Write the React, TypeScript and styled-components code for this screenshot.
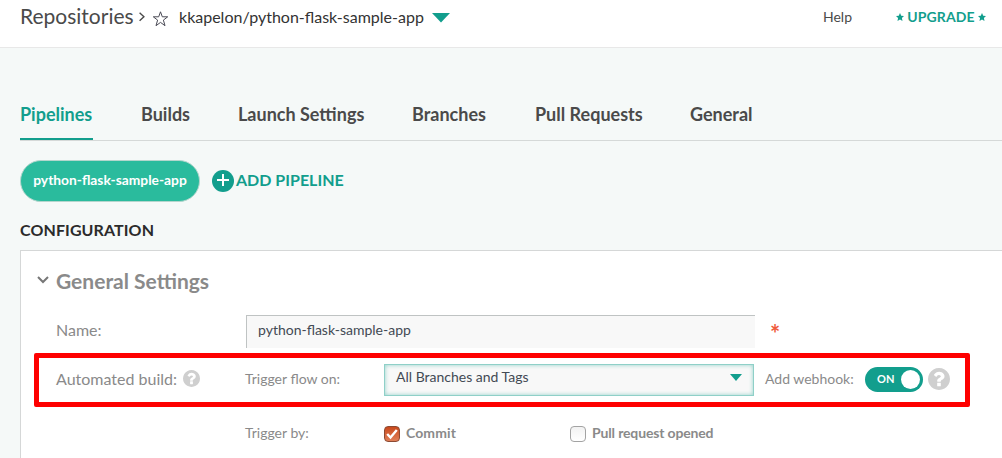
import React from 'react';
import styled, { createGlobalStyle } from 'styled-components';

const GlobalStyle = createGlobalStyle`
  * { box-sizing: border-box; }
  html, body { margin: 0; height: 458px; overflow: hidden; }
  body { background: #f5f9f8; font-family: Lato, "Liberation Sans", sans-serif; color: #4a4a4a; }
  button { font-family: inherit; border: 0; background: none; padding: 0; }
`;

const teal = '#129e8d';

const Page = styled.div`
  width: 1002px;
  height: 458px;
  overflow: hidden;
`;

const Header = styled.header`
  display: flex;
  align-items: flex-start;
  height: 48px;
  padding: 0 16px 0 20px;
  background: #fff;
  border-bottom: 1px solid #e8e8e8;
  white-space: nowrap;
`;

const Crumb = styled.span`
  width: 114px;
  font-size: 21px;
  line-height: 31px;
  color: #4a4a4a;
`;

const RepoName = styled.span`
  width: 246px;
  margin-left: 10px;
  font-size: 16px;
  line-height: 34px;
  color: #333;
`;

const HelpLink = styled.span`
  margin-left: auto;
  width: 29px;
  font-size: 14px;
  line-height: 33px;
`;

const Upgrade = styled.div`
  display: flex;
  align-items: center;
  justify-content: space-between;
  width: 90px;
  height: 33px;
  margin-left: 44px;
  font-size: 14px;
  font-weight: 700;
  letter-spacing: 0.1px;
  color: ${teal};
`;

const Main = styled.main`
  padding: 40px 0 0 20px;
`;

const Tabs = styled.nav`
  display: flex;
  gap: 48px;
  height: 53px;
  border-bottom: 1px solid #d5d9d8;
`;

const Tab = styled.span<{ $active?: boolean; $width: number }>`
  width: ${p => p.$width}px;
  height: 52px;
  border-bottom: ${p => (p.$active ? `2px solid ${teal}` : '0')};
  color: ${p => (p.$active ? teal : '#4a4a4a')};
  font-size: 18px;
  font-weight: 700;
  line-height: 53px;
  white-space: nowrap;
`;

const PipelineBar = styled.div`
  display: flex;
  align-items: center;
  gap: 12px;
  height: 42px;
  margin-top: 19px;
`;

const Pill = styled.button`
  width: 180px;
  height: 42px;
  padding-bottom: 3px;
  border: 1px solid #b4d6cd;
  border-radius: 21px;
  background: #2abb9d;
  color: #fff;
  font-size: 13.8px;
  font-weight: 700;
  white-space: nowrap;
`;

const AddButton = styled.button`
  display: flex;
  align-items: center;
  gap: 2px;
  color: ${teal};
  font-size: 16px;
  font-weight: 700;
  white-space: nowrap;
`;

const AddLabel = styled.span`
  padding-bottom: 3px;
`;

const SectionTitle = styled.h2`
  margin: 18px 0 0;
  height: 30px;
  font-size: 16px;
  font-weight: 700;
  letter-spacing: 0.1px;
  line-height: 19px;
  color: #2b2b2b;
`;

const Panel = styled.section`
  height: 240px;
  border: 1px solid #d5d7d7;
  border-right: 0;
  background: #fff;
`;

const PanelHeading = styled.h3`
  display: flex;
  align-items: center;
  gap: 7px;
  height: 62px;
  margin: 0;
  padding: 0 0 3px 16px;
  font-size: 21px;
  font-weight: 700;
  color: #8a8a8a;
`;

const Collapse = styled.svg`
  margin-bottom: 2px;
`;

const NameRow = styled.div`
  display: flex;
  height: 40px;
  padding: 2px 0 0 35px;
`;

const Label = styled.span<{ $width: number; $size?: number }>`
  width: ${p => p.$width}px;
  flex: none;
  padding-bottom: 2px;
  font-size: ${p => p.$size ?? 16}px;
  color: #8a8a8a;
  white-space: nowrap;
`;

const NameLabel = styled(Label)`
  line-height: 30px;
`;

const BuildLabel = styled(Label)`
  padding-bottom: 4px;
`;

const NameField = styled.div`
  width: 509px;
  height: 33px;
  padding-left: 11px;
  border-top: 1px solid #bfc3c3;
  border-left: 1px solid #bfc3c3;
  background: #f8f8f8;
  color: #434a54;
  font-size: 14px;
  line-height: 28px;
`;

const Required = styled.span`
  margin-left: 15px;
  font-size: 24px;
  font-weight: 700;
  line-height: 38px;
  color: #ef5a3c;
`;

const HighlightRow = styled.div`
  display: flex;
  align-items: center;
  width: 936px;
  height: 54px;
  margin-left: 13px;
  padding-left: 17px;
  border: 5px solid #fe0000;
  border-radius: 2px;
`;

const HelpSlot = styled.span<{ $size: number; $right: number; $lift: number }>`
  display: flex;
  width: ${p => p.$size}px;
  height: ${p => p.$size}px;
  margin-right: ${p => p.$right}px;
  margin-bottom: ${p => p.$lift}px;
`;

const Select = styled.div`
  display: flex;
  justify-content: space-between;
  width: 370px;
  height: 32px;
  margin-right: 11px;
  padding: 0 11px;
  border: 1px solid #8fd0c8;
  box-shadow: inset 0 0 4px #8fd0c8;
  background: #f8f8f8;
  color: #434a54;
  font-size: 14px;
  line-height: 24px;
`;

const SelectArrow = styled.svg`
  margin-top: 9px;
`;

const Toggle = styled.div`
  display: flex;
  align-items: center;
  justify-content: space-between;
  width: 58px;
  height: 25px;
  margin: 0 5px 1px 0;
  padding: 0 3px 0 12px;
  border-radius: 13px;
  background: ${teal};
  color: #fff;
  font-size: 11px;
  font-weight: 700;
`;

const ToggleText = styled.span`
  padding-bottom: 2px;
`;

const Knob = styled.span`
  width: 19px;
  height: 19px;
  border-radius: 50%;
  background: #fff;
`;

const TriggerRow = styled.div`
  display: flex;
  align-items: center;
  height: 53px;
  padding-left: 224px;
`;

const Option = styled.div<{ $tracking: number }>`
  display: flex;
  align-items: center;
  gap: 6px;
  width: 186px;
  color: #8a8a8a;
  font-size: 14px;
  font-weight: 700;
  letter-spacing: ${p => p.$tracking}px;
  white-space: nowrap;
`;

const OptionText = styled.span`
  padding-bottom: 2px;
`;

const Box = styled.span<{ $checked?: boolean }>`
  display: flex;
  align-items: center;
  justify-content: center;
  width: 16px;
  height: 16px;
  border: 1px solid ${p => (p.$checked ? '#8c4a33' : '#a3a3a3')};
  border-radius: 4px;
  background: ${p => (p.$checked ? 'linear-gradient(#c9491c, #e07f58)' : 'linear-gradient(#f2f2f2, #fff)')};
`;

const ChevronRight = styled.svg`
  margin: 12px 0 0 5px;
`;
const StarOutline = styled.svg`
  margin: 10px 0 0 7px;
`;
const RepoArrow = styled.svg`
  margin: 13px 0 0 7px;
`;

const SmallStar = () => (
  <svg width="8" height="8" viewBox="0 0 24 24" fill={teal}>
    <path d="M12 0l3.7 8 8.3 1-6.200 5.700L19.500 24 12 19.300 4.500 24l1.700-9.300L0 9l8.300-1z" />
  </svg>
);

const HelpIcon = ({ size, right = 0, lift = 0 }: { size: number; right?: number; lift?: number }) => (
  <HelpSlot $size={size} $right={right} $lift={lift}>
    <svg width={size} height={size} viewBox="128 128 1536 1536" fill="#cfcfcf">
      <path d="M1024 1376v-192q0-14-9-23t-23-9h-192q-14 0-23 9t-9 23v192q0 14 9 23t23 9h192q14 0 23-9t9-23zM1280 704q0-88-55.500-163t-138.500-116-170-41q-243 0-371 213-15 24 8 42l132 100q7 6 19 6 16 0 25-12 53-68 86-92 34-24 86-24 48 0 85.500 26t37.500 59q0 38-20 61t-68 45q-63 28-115.500 86.500t-52.500 125.500v36q0 14 9 23t23 9h192q14 0 23-9t9-23q0-19 21.500-49.500t54.500-49.500q32-18 49-28.500t46-35 44.500-48 28-60.500 12.500-81zM1664 896q0 209-103 385.500t-279.500 279.500-385.500 103-385.500-103-279.500-279.500-103-385.500 103-385.500 279.500-279.500 385.500-103 385.500 103 279.500 279.500 103 385.500z" />
    </svg>
  </HelpSlot>
);

const tabs = [
  { name: 'Pipelines', width: 73 },
  { name: 'Builds', width: 49 },
  { name: 'Launch Settings', width: 126 },
  { name: 'Branches', width: 75 },
  { name: 'Pull Requests', width: 107 },
  { name: 'General', width: 64 },
];

export default function App() {
  return (
    <Page>
      <GlobalStyle />
      <Header>
        <Crumb>Repositories</Crumb>
        <ChevronRight width="6" height="10" fill="none" stroke="#4a4a4a" strokeWidth="1.4">
          <path d="M.6 .8l4.300 4-4.300 4" />
        </ChevronRight>
        <StarOutline width="17" height="17" fill="none" stroke="#4a4a55" strokeWidth="1">
          <path d="M8.500 1.800l1.800 5h5.400l-4.300 3.300 1.600 5.600-4.500-3.300-4.500 3.300 1.600-5.600L1.300 6.800h5.400z" />
        </StarOutline>
        <RepoName>kkapelon/python-flask-sample-app</RepoName>
        <RepoArrow width="18" height="10" fill={teal}>
          <path d="M0 0h18L9 9.500z" />
        </RepoArrow>
        <HelpLink>Help</HelpLink>
        <Upgrade>
          <SmallStar />
          <span>UPGRADE</span>
          <SmallStar />
        </Upgrade>
      </Header>
      <Main>
        <Tabs>
          {tabs.map((t, i) => (
            <Tab key={t.name} $active={i === 0} $width={t.width}>{t.name}</Tab>
          ))}
        </Tabs>
        <PipelineBar>
          <Pill>python-flask-sample-app</Pill>
          <AddButton>
            <svg width="22" height="22">
              <circle cx="11" cy="11" r="11" fill={teal} />
              <path d="M11 4v12M5 10h12" stroke="#fff" strokeWidth="2" />
            </svg>
            <AddLabel>ADD PIPELINE</AddLabel>
          </AddButton>
        </PipelineBar>
        <SectionTitle>CONFIGURATION</SectionTitle>
        <Panel>
          <PanelHeading>
            <Collapse width="12" height="8" fill="none" stroke="#777" strokeWidth="2">
              <path d="M1 1l5 5 5-5" />
            </Collapse>
            General Settings
          </PanelHeading>
          <NameRow>
            <NameLabel $width={190}>Name:</NameLabel>
            <NameField>python-flask-sample-app</NameField>
            <Required>*</Required>
          </NameRow>
          <HighlightRow>
            <BuildLabel $width={127}>Automated build:</BuildLabel>
            <HelpIcon size={17} right={45} lift={4} />
            <BuildLabel $width={139} $size={14}>Trigger flow on:</BuildLabel>
            <Select>
              <span>All Branches and Tags</span>
              <SelectArrow width="12" height="8" fill={teal}>
                <path d="M0 0h12L6 7z" />
              </SelectArrow>
            </Select>
            <BuildLabel $width={100} $size={14}>Add webhook:</BuildLabel>
            <Toggle>
              <ToggleText>ON</ToggleText>
              <Knob />
            </Toggle>
            <HelpIcon size={22} lift={3} />
          </HighlightRow>
          <TriggerRow>
            <Label $width={139} $size={14}>Trigger by:</Label>
            <Option $tracking={0.1}>
              <Box $checked>
                <svg width="12" height="12" fill="none" stroke="#fff" strokeWidth="2.400">
                  <path d="M1.200 6l3.300 3.500L10.800 2" />
                </svg>
              </Box>
              <OptionText>Commit</OptionText>
            </Option>
            <Option $tracking={-0.15}>
              <Box />
              <OptionText>Pull request opened</OptionText>
            </Option>
          </TriggerRow>
        </Panel>
      </Main>
    </Page>
  );
}
